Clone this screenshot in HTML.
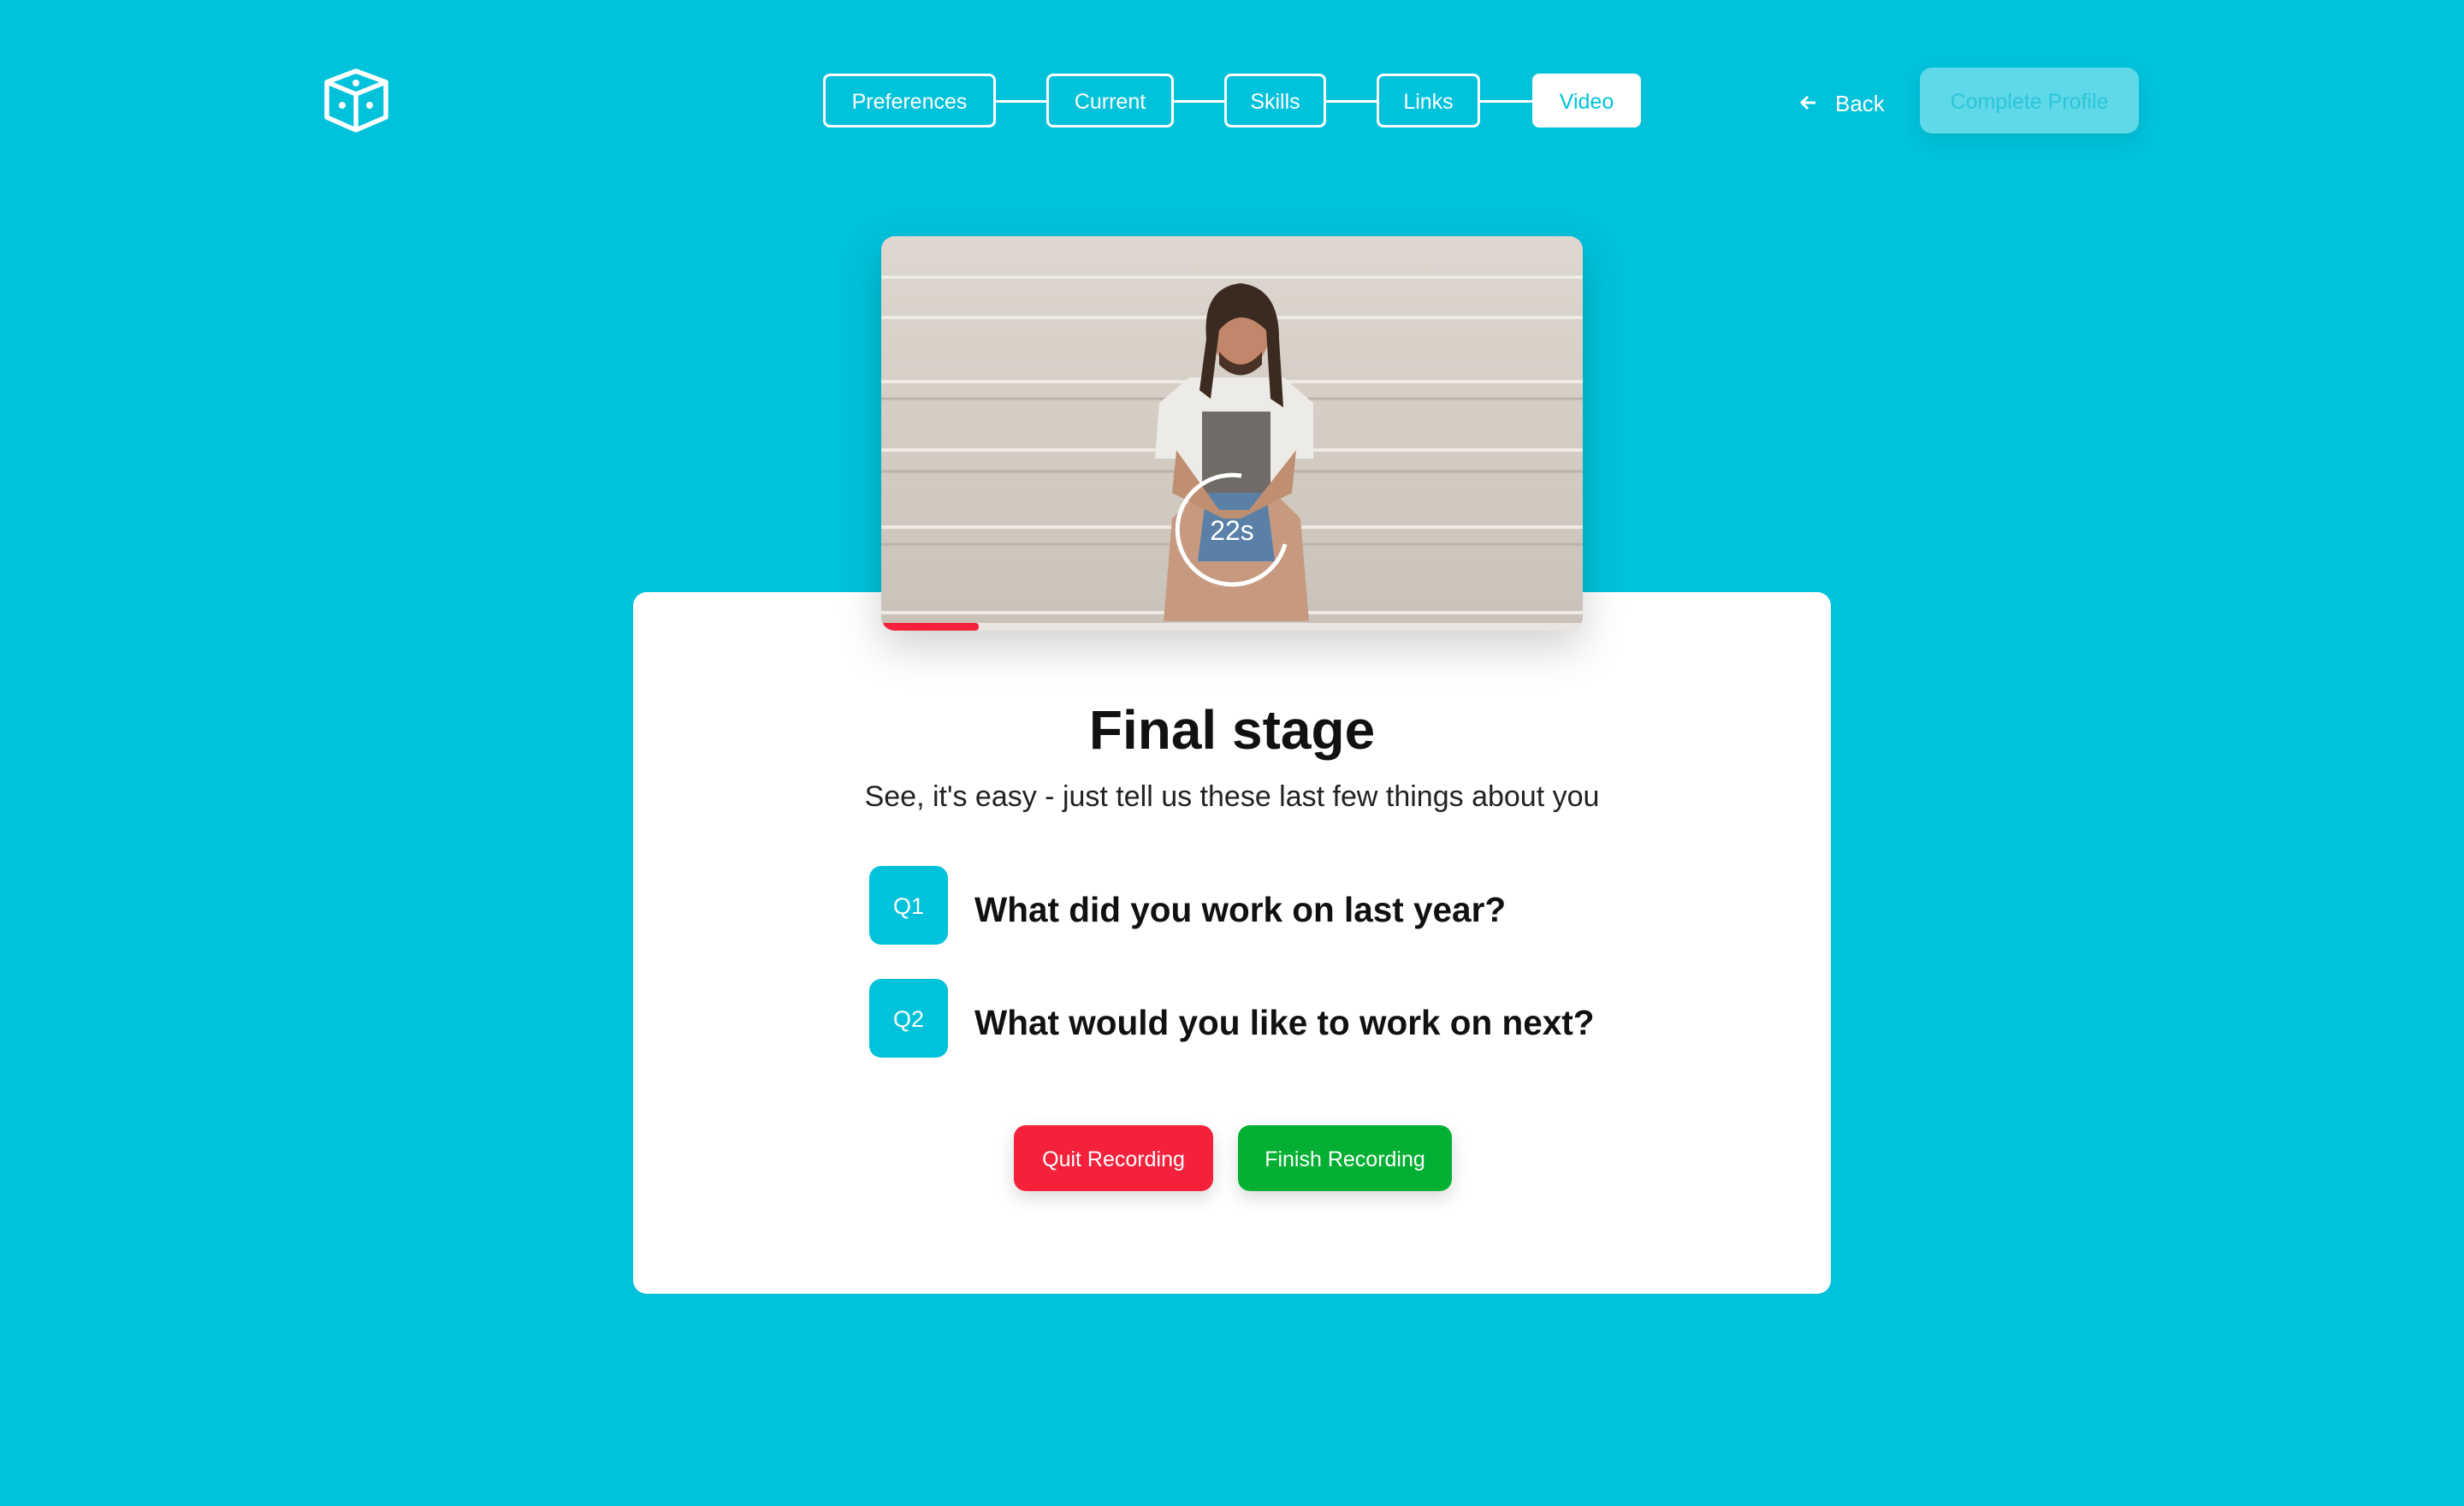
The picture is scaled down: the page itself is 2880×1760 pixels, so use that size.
<!DOCTYPE html>
<html><head><meta charset="utf-8"><style>
*{margin:0;padding:0;box-sizing:border-box}
body{width:2880px;height:1760px;background:#00c2da;font-family:"Liberation Sans",sans-serif;position:relative;overflow:hidden}
.pill{position:absolute;top:86px;height:63px;border:3px solid #fff;border-radius:8px;color:#fff;font-size:25px;display:flex;align-items:center;justify-content:center;padding-top:4px}
.line{position:absolute;top:117px;height:3px;background:#fff}
.card{position:absolute;left:740px;top:692px;width:1400px;height:820px;background:#fff;border-radius:16px}
.video{position:absolute;left:1030px;top:276px;width:820px;height:461px;border-radius:16px;overflow:hidden;box-shadow:0 20px 50px rgba(0,0,0,.18);background:#d3cdc4}
.q{position:absolute;left:1016px;width:92px;height:92px;border-radius:14px;background:#00c2da;color:#fff;font-size:27px;display:flex;align-items:center;justify-content:center;padding-top:3px}
.qt{position:absolute;left:1139px;font-size:40.5px;font-weight:bold;color:#111}
.btn{position:absolute;top:1315px;height:77px;border-radius:14px;color:#fff;font-size:25px;display:flex;align-items:center;justify-content:center;box-shadow:0 8px 20px rgba(0,0,0,.15);padding-top:3px}
</style></head><body>
<svg style="position:absolute;left:370px;top:70px" width="100" height="100" viewBox="370 70 100 100">
<g fill="none" stroke="#fff" stroke-width="5.5" stroke-linejoin="round"><path d="M416 83 L451 96 L451 137 L416 152 L382 137 L382 96 Z"/><path d="M382 96 L416 110 L451 96 M416 110 L416 152"/></g>
<g fill="#fff"><circle cx="416" cy="97" r="4"/><circle cx="400" cy="123" r="4"/><circle cx="432" cy="123" r="4"/></g></svg>

<div class="line" style="left:1164px;width:59px"></div>
<div class="line" style="left:1372px;width:59px"></div>
<div class="line" style="left:1550px;width:59px"></div>
<div class="line" style="left:1730px;width:61px"></div>
<div class="pill" style="left:962px;width:202px">Preferences</div>
<div class="pill" style="left:1223px;width:149px">Current</div>
<div class="pill" style="left:1431px;width:119px">Skills</div>
<div class="pill" style="left:1609px;width:121px">Links</div>
<div class="pill" style="left:1791px;width:127px;background:#fff;color:#00c2da">Video</div>

<svg style="position:absolute;left:2102px;top:108px" width="24" height="24" viewBox="0 0 24 24"><path d="M20 12H5M11 5l-7 7 7 7" fill="none" stroke="#fff" stroke-width="3"/></svg>
<div style="position:absolute;left:2145px;top:106px;color:#fff;font-size:26px">Back</div>
<div style="position:absolute;left:2244px;top:79px;width:256px;height:77px;border-radius:14px;background:#5fd8e7;color:#2bc6da;font-size:25px;display:flex;align-items:center;justify-content:center;box-shadow:0 8px 20px rgba(0,0,0,.08);padding-top:3px">Complete Profile</div>

<div class="card"></div>
<div class="video">
<svg width="820" height="461" viewBox="0 0 820 461">
<defs><linearGradient id="g" x1="0" y1="0" x2="0" y2="1"><stop offset="0" stop-color="#ddd7cf"/><stop offset="1" stop-color="#c9c2b8"/></linearGradient></defs>
<rect width="820" height="461" fill="url(#g)"/>
<g stroke="#eeeae4" stroke-width="4"><line x1="0" y1="48" x2="820" y2="48"/><line x1="0" y1="95" x2="820" y2="95"/><line x1="0" y1="170" x2="820" y2="170"/><line x1="0" y1="250" x2="820" y2="250"/><line x1="0" y1="340" x2="820" y2="340"/><line x1="0" y1="440" x2="820" y2="440"/></g>
<g stroke="#bbb3a8" stroke-width="3"><line x1="0" y1="190" x2="820" y2="190"/><line x1="0" y1="275" x2="820" y2="275"/><line x1="0" y1="360" x2="820" y2="360"/></g>
<path d="M330 450 L340 330 L370 300 L460 300 L490 330 L500 450 Z" fill="#c79a80"/>
<path d="M380 300 L450 300 L460 380 L370 380 Z" fill="#5a80a8"/>
<path d="M325 195 L360 165 L470 165 L505 195 L505 260 L480 260 L470 300 L350 300 L345 260 L320 260 Z" fill="#ecebe8"/>
<path d="M375 205 L455 205 L455 300 L375 300 Z" fill="#6f6b66"/>
<path d="M345 250 L395 320 L430 320 L485 250 L480 300 L420 330 L400 330 L340 300 Z" fill="#c08f72"/>
<ellipse cx="420" cy="110" rx="34" ry="46" fill="#c2876a"/>
<path d="M380 120 Q375 60 420 55 Q465 60 465 120 L470 200 L455 190 L450 110 Q420 80 395 110 L385 190 L372 180 Z" fill="#3b2a20"/>
<path d="M395 135 Q420 165 445 135 L445 150 Q420 175 395 150 Z" fill="#4a3326"/>
<rect y="452" width="820" height="9" fill="#e9e5e0"/>
<rect y="452" width="114" height="9" rx="4" fill="#f5213b"/>
<path d="M 421 280 A 64 64 0 1 0 472 360" fill="none" stroke="#fff" stroke-width="5"/>
<text x="410" y="355" fill="#fff" font-size="32" font-family="Liberation Sans" text-anchor="middle">22s</text>
</svg></div>

<div style="position:absolute;left:740px;width:1400px;top:816px;text-align:center;font-size:64px;font-weight:bold;color:#111">Final stage</div>
<div style="position:absolute;left:740px;width:1400px;top:912px;text-align:center;font-size:34px;color:#222">See, it's easy - just tell us these last few things about you</div>
<div class="q" style="top:1012px">Q1</div>
<div class="qt" style="top:1040px">What did you work on last year?</div>
<div class="q" style="top:1144px">Q2</div>
<div class="qt" style="top:1172px">What would you like to work on next?</div>
<div class="btn" style="left:1185px;width:233px;background:#f5213b">Quit Recording</div>
<div class="btn" style="left:1447px;width:250px;background:#03b033">Finish Recording</div>
</body></html>
